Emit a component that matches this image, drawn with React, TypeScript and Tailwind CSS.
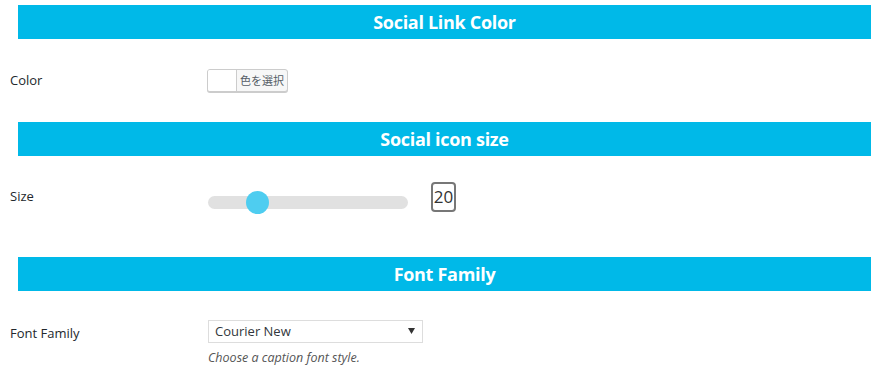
import React from 'react'

const font = { fontFamily: '"Open Sans", "Noto Sans CJK JP", sans-serif' }

const SectionHeader = ({ title }: { title: string }) => (
    <div className="mx-[18px] h-[34px] bg-[#00b9e8] flex items-center justify-center">
        <h2 className="text-white text-[18px] font-bold leading-none tracking-[-0.3px]">{title}</h2>
    </div>
)

const Row = ({ label, children, className, labelClass }: { label: string; children: React.ReactNode; className?: string; labelClass?: string }) => (
    <div className={`flex ${className ?? ''}`}>
        <div className={`w-[208px] pl-[10px] text-[13px] text-[#23282d] ${labelClass ?? ''}`}>{label}</div>
        <div>{children}</div>
    </div>
)

export default function App() {
    return (
        <div className="w-[889px] h-[374px] bg-white pt-[5px] overflow-hidden" style={font}>
            <SectionHeader title="Social Link Color" />
            <Row label="Color" className="mt-[30px] items-center">
                <button className="-ml-px flex h-[23px] w-[81px] rounded-[3px] border border-[#cccccc] bg-[#f7f7f7] shadow-[0_1px_0_#cccccc] overflow-hidden">
                    <span className="w-[29px] h-full bg-white border-r border-[#cccccc]" />
                    <span className="flex-1 text-[11px] leading-[21px] text-[#555d66] text-center">色を選択</span>
                </button>
            </Row>

            <div className="mt-[30px]">
                <SectionHeader title="Social icon size" />
            </div>
            <Row label="Size" className="mt-[26px] items-center">
                <div className="flex items-start">
                    <div className="relative mt-[14px] w-[200px] h-[13px] rounded-full bg-[#e1e1e1]">
                        <div className="absolute left-[38px] top-[-5px] w-[23px] h-[23px] rounded-full bg-[#4ecdf0]" />
                    </div>
                    <div className="ml-[23px] w-[25px] h-[30px] rounded-[4px] border-2 border-[#777777] flex items-center justify-center text-[17px] text-[#333333]">
                        20
                    </div>
                </div>
            </Row>

            <div className="mt-[45px]">
                <SectionHeader title="Font Family" />
            </div>
            <Row label="Font Family" className="mt-[29px]" labelClass="pt-[4px]">
                <div>
                    <div className="w-[215px] h-[23px] border border-[#dddddd] flex items-center justify-between pl-[6px] pr-[7px] text-[13px] text-[#32373c]">
                        <span>Courier New</span>
                        <svg width="7" height="6" viewBox="0 0 7 6" className="mb-[2px]">
                            <path d="M0 0 H7 L3.5 6 Z" fill="#333333" />
                        </svg>
                    </div>
                    <p className="mt-[6px] text-[12.5px] italic text-[#555555]">Choose a caption font style.</p>
                </div>
            </Row>
        </div>
    )
}
